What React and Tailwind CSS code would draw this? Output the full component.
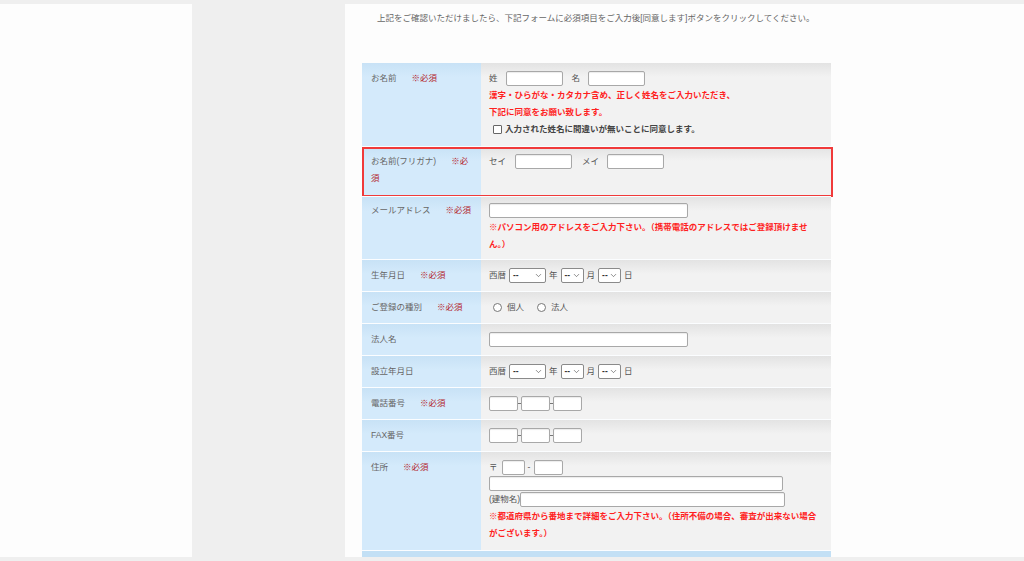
import { ChevronDown } from "lucide-react";

// 入力フォーム（会員登録・申込フォームの一部）
const FONT = { fontFamily: '"Liberation Sans", "Noto Sans CJK JP", sans-serif' };

function Req() {
  return <span className="ml-[15px] text-[#b3262d]">※必須</span>;
}

function Box({ className = "" }) {
  return (
    <input
      type="text"
      className={`h-[15px] shrink-0 rounded-[2px] border border-[#a8a8a8] bg-white shadow-[inset_0_1px_1px_rgba(0,0,0,0.08)] outline-none ${className}`}
    />
  );
}

function Select({ wide }) {
  return (
    <span
      className={`inline-flex h-[15px] items-center justify-between rounded-[2px] border border-[#8a8a8a] bg-white pl-[3px] pr-[2px] text-[#333] ${
        wide ? "w-[37px]" : "w-[23px]"
      }`}
    >
      <span className="font-bold leading-none">--</span>
      <ChevronDown size={9} strokeWidth={1.6} className="text-[#444]" />
    </span>
  );
}

function Radio({ label }) {
  return (
    <span className="flex items-center">
      <span className="ml-[4px] h-[9px] w-[9px] rounded-full border border-[#777] bg-white" />
      <span className="ml-[5px]">{label}</span>
    </span>
  );
}

function DateRow() {
  return (
    <div className="flex items-center">
      <span>西暦</span>
      <span className="ml-[3px]"><Select wide /></span>
      <span className="ml-[3px]">年</span>
      <span className="ml-[3px]"><Select /></span>
      <span className="ml-[3px]">月</span>
      <span className="ml-[3px]"><Select /></span>
      <span className="ml-[3px]">日</span>
    </div>
  );
}

function Tel() {
  return (
    <div className="flex items-center">
      <Box className="w-[29px]" />
      <span className="h-px w-[3px] bg-[#777]" />
      <Box className="w-[29px]" />
      <span className="h-px w-[3px] bg-[#777]" />
      <Box className="w-[29px]" />
    </div>
  );
}

// 1行分：左がラベル（水色）、右が入力欄（グレー）
function Row({ label, req, h, top, first, children }) {
  const align = top ? "items-start" : "items-center";
  return (
    <div className={`relative flex ${h} ${first ? "" : "border-t border-[#fbfdff]"}`}>
      <div
        className={`flex w-[119px] shrink-0 ${align} ${top ?? ""} bg-[linear-gradient(to_bottom,#c8e2f6,#d4eafb_14px)] pl-[9px] pr-[8px] leading-[17px] text-[#666]`}
      >
        <span>
          {label}
          {req && <Req />}
        </span>
      </div>
      <div
        className={`flex flex-1 flex-col ${top ? "" : "justify-center"} ${top ?? ""} bg-[linear-gradient(to_bottom,#e3e3e3,#f2f2f2_14px)] pl-[8px] text-[#555]`}
      >
        {children}
      </div>
    </div>
  );
}

const Note = ({ children }) => (
  <p className="whitespace-nowrap font-bold leading-[17px] text-[#ff1f1f]">{children}</p>
);

export default function App() {
  return (
    <div className="min-h-[561px] bg-[#efefef] pt-[4px] text-[8.5px]" style={FONT}>
      <div className="flex h-[553px]">
        <div className="w-[192px] shrink-0 bg-[#fdfdfd]" />
        <div className="w-[153px] shrink-0 bg-[#efefef]" />
        <div className="flex-1 overflow-hidden bg-[#fdfdfd]">
          <p className="whitespace-nowrap pl-[32px] pt-[6px] leading-[16px] text-[#666]">
            上記をご確認いただけましたら、下記フォームに必須項目をご入力後[同意します]ボタンをクリックしてください。
          </p>

          <div className="ml-[17px] mt-[37px] w-[469px]">
            <Row label="お名前" req first h="h-[83px]" top="pt-[7px]">
              <div className="flex h-[17px] items-center">
                <span>姓</span>
                <Box className="ml-[8px] w-[57px]" />
                <span className="ml-[9px]">名</span>
                <Box className="ml-[8px] w-[57px]" />
              </div>
              <Note>漢字・ひらがな・カタカナ含め、正しく姓名をご入力いただき、</Note>
              <Note>下記に同意をお願い致します。</Note>
              <div className="flex h-[17px] items-center font-bold text-[#444]">
                <span className="ml-[4px] h-[9px] w-[9px] rounded-[1px] border border-[#666] bg-white" />
                <span className="ml-[3px]">入力された姓名に間違いが無いことに同意します。</span>
              </div>
            </Row>

            <Row label="お名前(フリガナ)" req h="h-[50px]" top="pt-[6px]">
              <div className="flex h-[17px] items-center">
                <span>セイ</span>
                <Box className="ml-[9px] w-[57px]" />
                <span className="ml-[10px]">メイ</span>
                <Box className="ml-[8px] w-[57px]" />
              </div>
              <span className="pointer-events-none absolute -bottom-[1px] -right-[2px] left-0 top-0 border-2 border-[#f03a3a]" />
            </Row>

            <Row label="メールアドレス" req h="h-[63px]" top="pt-[5px]">
              <div className="flex h-[17px] items-center">
                <Box className="w-[199px]" />
              </div>
              <Note>※パソコン用のアドレスをご入力下さい。（携帯電話のアドレスではご登録頂けませ</Note>
              <Note>ん。）</Note>
            </Row>

            <Row label="生年月日" req h="h-[32px]">
              <DateRow />
            </Row>

            <Row label="ご登録の種別" req h="h-[32px]">
              <div className="flex items-center">
                <Radio label="個人" />
                <span className="ml-[9px]" />
                <Radio label="法人" />
              </div>
            </Row>

            <Row label="法人名" h="h-[32px]">
              <div className="flex">
                <Box className="w-[199px]" />
              </div>
            </Row>

            <Row label="設立年月日" h="h-[32px]">
              <DateRow />
            </Row>

            <Row label="電話番号" req h="h-[32px]">
              <Tel />
            </Row>

            <Row label="FAX番号" h="h-[32px]">
              <Tel />
            </Row>

            <Row label="住所" req h="h-[99px]" top="pt-[7px]">
              <div className="flex h-[16px] items-center">
                <span>〒</span>
                <Box className="ml-[4px] w-[23px]" />
                <span className="ml-[3px]">-</span>
                <Box className="ml-[4px] w-[29px]" />
              </div>
              <div className="flex h-[16px] items-center">
                <Box className="w-[294px]" />
              </div>
              <div className="flex h-[16px] items-center">
                <span>(建物名)</span>
                <Box className="w-[265px]" />
              </div>
              <div className="mt-[1px]">
                <Note>※都道府県から番地まで詳細をご入力下さい。（住所不備の場合、審査が出来ない場合</Note>
                <Note>がございます。）</Note>
              </div>
            </Row>

            <div className="flex h-[20px] border-t border-[#fbfdff]">
              <div className="w-[119px] bg-[#c3e0f5]" />
              <div className="flex-1 bg-[#c3e0f5]" />
            </div>
          </div>
        </div>
      </div>
    </div>
  );
}
